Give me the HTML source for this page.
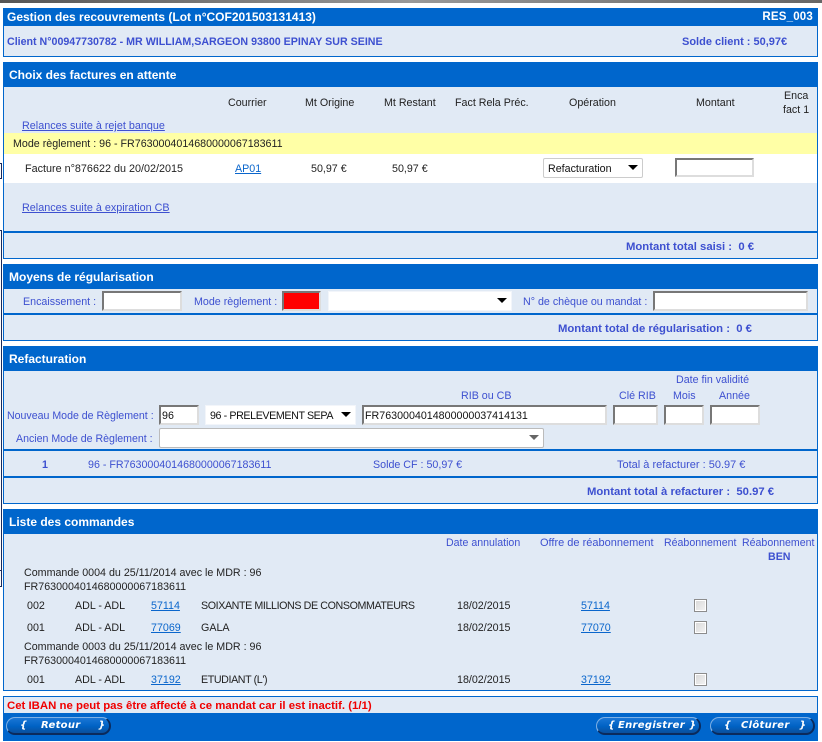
<!DOCTYPE html>
<html lang="fr"><head><meta charset="utf-8"><title>Gestion des recouvrements</title>
<style>
html,body{margin:0;padding:0;background:#fff;width:822px;height:742px;overflow:hidden}
body{position:relative;font:10.7px/12px "Liberation Sans",Arial,sans-serif;color:#222}
.a,.t,.b,.h,.l,.i,.s,.c,.btn{position:absolute}
.t,.b,.l{white-space:nowrap;margin-top:3px}
.u{color:#3d50d0}
.b{font-weight:bold;color:#3d50d0;font-size:11.3px}
.l{color:#0a66cc;text-decoration:underline}
.lu{color:#3d50d0;text-decoration:underline;font-size:10.8px}
.cap{letter-spacing:-.4px}
.p{position:absolute;left:3px;width:813px;background:#e1eaf5;border:1px solid #0066cc;box-sizing:content-box}
.h{left:3px;width:815px;background:#0066cc;color:#fff;font-weight:bold;font-size:12px;line-height:14px;white-space:nowrap}
.h span{position:absolute}
.line{position:absolute;left:3px;width:815px;height:2px;background:#0066cc}
.i{box-sizing:border-box;background:#fff;border:2px solid;border-color:#777 #ddd #ddd #777;font-size:10.7px;line-height:19px;padding-left:1px;color:#111;white-space:nowrap;overflow:hidden}
.s{box-sizing:border-box;background:#fff;border:1px solid #f2f5fa;font-size:10.7px;line-height:20px;color:#111;padding-left:4px;white-space:nowrap}
.s:after{content:"";position:absolute;right:4px;top:6px;border-style:solid;border-color:#000 transparent transparent;border-width:5px 5px 0}
.s.g:after{border-top-color:#666}
.c{box-sizing:border-box;width:13px;height:13px;background:linear-gradient(135deg,#d8d8d8,#f4f4f4);border:1px solid #8c8c8c;box-shadow:inset 0 0 0 1px #fff}
.btn{height:18px;border-radius:9px;box-sizing:border-box;width:105px;background:linear-gradient(#1a76d6,#0062c4 55%,#0a4f9c);border:1px solid #7fb0e4;border-bottom:2px solid #0b2a5c;border-right:2px solid #0b2a5c;color:#fff;font:italic bold 10px/15px "DejaVu Sans",sans-serif;letter-spacing:.3px;white-space:nowrap}
.btn span{position:absolute;top:0}
</style></head><body>
<div class="a" style="left:0;top:0;width:822px;height:3px;background:linear-gradient(90deg,#555,#999 50%,#666)"></div>
<div class="a" style="left:0;top:163px;width:2px;height:16px;border:1px solid #1a2a5a;border-left:none;box-sizing:border-box"></div>
<div class="a" style="left:0;top:230px;width:2px;height:357px;border:1px solid #1a2a5a;border-left:none;box-sizing:border-box"></div>
<div class="a" style="left:0;top:570px;width:2px;height:1px;background:#1a2a5a"></div>

<!-- panel 1 -->
<div class="p" style="top:8px;height:47px"></div>
<div class="h" style="top:8px;height:18px"><span style="left:4px;top:2px">Gestion des recouvrements (Lot n°COF201503131413)</span><span style="right:5px;top:2px;letter-spacing:.2px;font-size:11.5px">RES_003</span></div>
<div class="b" style="left:7px;top:33px;font-size:10.67px">Client N°00947730782 - MR WILLIAM,SARGEON 93800 EPINAY SUR SEINE</div>
<div class="b" style="left:682px;top:33px;font-size:11px">Solde client : 50,97€</div>

<!-- panel 2 -->
<div class="p" style="top:62px;height:195px"></div>
<div class="h" style="top:62px;height:25px"><span style="left:6px;top:6px">Choix des factures en attente</span></div>
<div class="t" style="left:228px;top:94px">Courrier</div>
<div class="t" style="left:305px;top:94px">Mt Origine</div>
<div class="t" style="left:384px;top:94px">Mt Restant</div>
<div class="t" style="left:455px;top:94px">Fact Rela Préc.</div>
<div class="t" style="left:569px;top:94px">Opération</div>
<div class="t" style="left:696px;top:94px">Montant</div>
<div class="t" style="left:784px;top:87px">Enca</div>
<div class="t" style="left:783px;top:101px">fact 1</div>
<div class="t lu" style="left:22px;top:117px">Relances suite à rejet banque</div>
<div class="a" style="left:4px;top:133px;width:813px;height:21px;background:#ffffa6"></div>
<div class="t" style="left:13px;top:135px">Mode règlement : 96 - FR7630004014680000067183611</div>
<div class="a" style="left:4px;top:154px;width:813px;height:29px;background:#fff"></div>
<div class="t" style="left:25px;top:160px;font-size:10.8px">Facture n°876622 du 20/02/2015</div>
<div class="l" style="left:235px;top:160px">AP01</div>
<div class="t" style="left:311px;top:160px">50,97 €</div>
<div class="t" style="left:392px;top:160px">50,97 €</div>
<div class="s" style="left:543px;top:158px;width:100px;height:20px;border:1px solid #ccc;border-radius:2px">Refacturation</div>
<div class="i" style="left:675px;top:158px;width:79px;height:19px"></div>
<div class="t lu" style="left:22px;top:199px">Relances suite à expiration CB</div>
<div class="line" style="top:231px"></div>
<div class="b" style="left:626px;top:238px">Montant total saisi :&nbsp; 0 €</div>

<!-- panel 3 -->
<div class="p" style="top:264px;height:75px"></div>
<div class="h" style="top:264px;height:25px"><span style="left:6px;top:6px">Moyens de régularisation</span></div>
<div class="t u" style="left:23px;top:293px">Encaissement :</div>
<div class="i" style="left:102px;top:291px;width:80px;height:20px"></div>
<div class="t u" style="left:194px;top:293px">Mode règlement :</div>
<div class="i" style="left:282px;top:291px;width:39px;height:20px;background:#f00"></div>
<div class="s" style="left:328px;top:291px;width:184px;height:20px"></div>
<div class="t u" style="left:523px;top:293px">N° de chèque ou mandat :</div>
<div class="i" style="left:653px;top:291px;width:155px;height:20px"></div>
<div class="line" style="top:313px"></div>
<div class="b" style="left:558px;top:320px">Montant total de régularisation :&nbsp; 0 €</div>

<!-- panel 4 -->
<div class="p" style="top:346px;height:156px"></div>
<div class="h" style="top:346px;height:25px"><span style="left:6px;top:6px">Refacturation</span></div>
<div class="t u" style="left:676px;top:371px">Date fin validité</div>
<div class="t u" style="left:461px;top:387px">RIB ou CB</div>
<div class="t u" style="left:619px;top:387px">Clé RIB</div>
<div class="t u" style="left:673px;top:387px">Mois</div>
<div class="t u" style="left:719px;top:387px">Année</div>
<div class="t u" style="left:7px;top:407px;font-size:10.6px">Nouveau Mode de Règlement :</div>
<div class="i" style="left:159px;top:405px;width:40px;height:20px">96</div>
<div class="s cap" style="left:205px;top:405px;width:151px;height:20px">96 - PRELEVEMENT SEPA</div>
<div class="i" style="left:362px;top:405px;width:245px;height:20px">FR7630004014800000037414131</div>
<div class="i" style="left:613px;top:405px;width:45px;height:20px"></div>
<div class="i" style="left:664px;top:405px;width:40px;height:20px"></div>
<div class="i" style="left:710px;top:405px;width:50px;height:20px"></div>
<div class="t u" style="left:16px;top:430px;font-size:10.6px">Ancien Mode de Règlement :</div>
<div class="s g" style="left:159px;top:428px;width:385px;height:20px;border:1px solid #bbb;border-radius:2px"></div>
<div class="line" style="top:449px"></div>
<div class="b" style="left:42px;top:456px;font-size:10.7px">1</div>
<div class="t u" style="left:88px;top:456px">96 - FR7630004014680000067183611</div>
<div class="t u" style="left:373px;top:456px">Solde CF : 50,97 €</div>
<div class="t u" style="left:617px;top:456px;font-size:11px">Total à refacturer : 50.97 €</div>
<div class="line" style="top:476px"></div>
<div class="b" style="left:587px;top:483px">Montant total à refacturer :&nbsp; 50.97 €</div>

<!-- panel 5 -->
<div class="p" style="top:509px;height:180px"></div>
<div class="h" style="top:509px;height:25px"><span style="left:6px;top:6px">Liste des commandes</span></div>
<div class="t u" style="left:446px;top:534px;font-size:10.6px">Date annulation</div>
<div class="t u" style="left:540px;top:534px;font-size:11px">Offre de réabonnement</div>
<div class="t u" style="left:664px;top:534px;font-size:10.6px">Réabonnement</div>
<div class="t u" style="left:742px;top:534px;font-size:10.6px">Réabonnement</div>
<div class="b" style="left:768px;top:548px;font-size:10.67px">BEN</div>
<div class="t" style="left:24px;top:564px">Commande 0004 du 25/11/2014 avec le MDR : 96</div>
<div class="t" style="left:24px;top:578px">FR7630004014680000067183611</div>
<div class="t" style="left:27px;top:597px">002</div><div class="t" style="left:75px;top:597px">ADL - ADL</div><div class="l" style="left:151px;top:597px">57114</div><div class="t cap" style="left:201px;top:597px">SOIXANTE MILLIONS DE CONSOMMATEURS</div><div class="t" style="left:457px;top:597px">18/02/2015</div><div class="l" style="left:581px;top:597px">57114</div><div class="c" style="left:694px;top:599px"></div>
<div class="t" style="left:27px;top:619px">001</div><div class="t" style="left:75px;top:619px">ADL - ADL</div><div class="l" style="left:151px;top:619px">77069</div><div class="t" style="left:201px;top:619px">GALA</div><div class="t" style="left:457px;top:619px">18/02/2015</div><div class="l" style="left:581px;top:619px">77070</div><div class="c" style="left:694px;top:621px"></div>
<div class="t" style="left:24px;top:638px">Commande 0003 du 25/11/2014 avec le MDR : 96</div>
<div class="t" style="left:24px;top:652px">FR7630004014680000067183611</div>
<div class="t" style="left:27px;top:671px">001</div><div class="t" style="left:75px;top:671px">ADL - ADL</div><div class="l" style="left:151px;top:671px">37192</div><div class="t cap" style="left:201px;top:671px">ETUDIANT (L')</div><div class="t" style="left:457px;top:671px">18/02/2015</div><div class="l" style="left:581px;top:671px">37192</div><div class="c" style="left:694px;top:673px"></div>

<!-- panel 6 -->
<div class="p" style="top:696px;height:16px"></div>
<div class="t" style="left:7px;top:697px;font-weight:bold;font-size:11.4px;color:#f00000">Cet IBAN ne peut pas être affecté à ce mandat car il est inactif. (1/1)</div>
<div class="a" style="left:3px;top:713px;width:815px;height:28px;background:#0066cc"></div>
<div class="btn" style="left:6px;top:717px"><span style="left:13px">{</span><span style="left:34px">Retour</span><span style="left:91px">}</span></div>
<div class="btn" style="left:596px;top:717px"><span style="left:11px">{</span><span style="left:21px">Enregistrer</span><span style="left:92px">}</span></div>
<div class="btn" style="left:710px;top:717px"><span style="left:13px">{</span><span style="left:30px">Clôturer</span><span style="left:88px">}</span></div>
</body></html>
